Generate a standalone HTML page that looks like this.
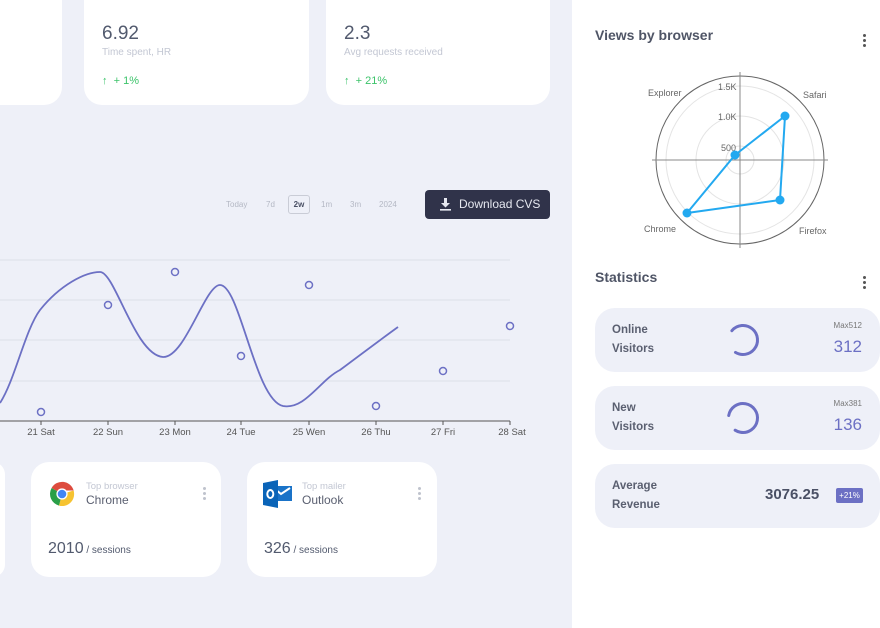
<!DOCTYPE html>
<html><head><meta charset="utf-8"><style>
*{margin:0;padding:0;box-sizing:border-box}
body{width:880px;height:628px;overflow:hidden;background:#eef0f8;font-family:"Liberation Sans",sans-serif;position:relative;color:#4a5065}
.card{position:absolute;background:#fff;border-radius:18px}
.abs{position:absolute}
.big{font-size:19px;color:#525a6e}
.sub{font-size:10px;color:#c3c7d3}
.up{font-size:11px;color:#3cc36a}
.dots{position:absolute;width:3px}
.dots i{display:block;width:3px;height:3px;border-radius:50%;background:#bfc3cd;margin-bottom:2px}
.right{position:absolute;left:572px;top:0;width:308px;height:628px;background:#fff}
.st{position:absolute;left:23px;width:285px;height:64px;background:#eef0f8;border-radius:20px}
.st .l{position:absolute;left:17px;top:13px;font-size:11.5px;font-weight:bold;color:#5a5f70;line-height:19px}
.h{font-size:14px;color:#4f5566;font-weight:bold}
</style></head><body>
<div class="card" style="left:-20px;top:-20px;width:82px;height:125px"></div>
<div class="card" style="left:84px;top:-20px;width:225px;height:125px">
 <div class="abs big" style="left:18px;top:43px">6.92</div>
 <div class="abs sub" style="left:18px;top:67px">Time spent, HR</div>
 <div class="abs up" style="left:18px;top:95px">↑ &nbsp;+ 1%</div>
</div>
<div class="card" style="left:326px;top:-20px;width:224px;height:125px">
 <div class="abs big" style="left:18px;top:43px">2.3</div>
 <div class="abs sub" style="left:18px;top:67px">Avg requests received</div>
 <div class="abs up" style="left:18px;top:95px">↑ &nbsp;+ 21%</div>
</div>
<div class="abs" style="left:226px;top:200px;font-size:8px;color:#b4b8c4">Today</div>
<div class="abs" style="left:266px;top:200px;font-size:8px;color:#b4b8c4">7d</div>
<div class="abs" style="left:288px;top:195px;width:22px;height:19px;border:1px solid #c9ccd6;border-radius:3px;font-size:8px;color:#4a5065;text-align:center;line-height:17px;font-weight:bold">2w</div>
<div class="abs" style="left:321px;top:200px;font-size:8px;color:#b4b8c4">1m</div>
<div class="abs" style="left:350px;top:200px;font-size:8px;color:#b4b8c4">3m</div>
<div class="abs" style="left:379px;top:200px;font-size:8px;color:#b4b8c4">2024</div>
<div class="abs" style="left:425px;top:190px;width:125px;height:29px;background:#30334a;border-radius:4px;color:#e6e8f0;font-size:12px;line-height:29px;padding-left:34px">Download CVS
 <svg class="abs" style="left:15px;top:8px" width="11" height="13" viewBox="0 0 11 13"><path d="M4 0h3v5h3l-4.5 4.5L1 5h3z M0 11h11v1.6H0z" fill="#e6e8f0"/></svg></div>
<svg class="abs" style="left:0;top:250px" width="530" height="200">
 <g stroke="#dcdfe8" stroke-width="1"><line x1="0" y1="10" x2="510" y2="10"/><line x1="0" y1="50" x2="510" y2="50"/><line x1="0" y1="90" x2="510" y2="90"/><line x1="0" y1="131" x2="510" y2="131"/></g>
 <line x1="0" y1="171" x2="510" y2="171" stroke="#555" stroke-width="1"/>
 <g stroke="#555"><line x1="41" y1="171" x2="41" y2="175"/><line x1="108" y1="171" x2="108" y2="175"/><line x1="175" y1="171" x2="175" y2="175"/><line x1="241" y1="171" x2="241" y2="175"/><line x1="309" y1="171" x2="309" y2="175"/><line x1="376" y1="171" x2="376" y2="175"/><line x1="443" y1="171" x2="443" y2="175"/><line x1="510" y1="171" x2="510" y2="175"/></g>
 <g font-size="9.5" fill="#555" text-anchor="middle"><text x="41" y="185">21 Sat</text><text x="108" y="185">22 Sun</text><text x="175" y="185">23 Mon</text><text x="241" y="185">24 Tue</text><text x="309" y="185">25 Wen</text><text x="376" y="185">26 Thu</text><text x="443" y="185">27 Fri</text><text x="512" y="185">28 Sat</text></g>
 <path d="M0 153 C15 130 25 80 40 60 C60 35 85 22 100 22 C115 22 135 105 163 107 C185 108 205 35 220 35 C240 35 255 150 283 156 C305 160 320 130 340 120 C360 105 380 90 398 77" fill="none" stroke="#6c70c4" stroke-width="1.8"/>
 <g fill="#eef0f8" stroke="#6c70c4" stroke-width="1.5"><circle cx="41" cy="162" r="3.5"/><circle cx="108" cy="55" r="3.5"/><circle cx="175" cy="22" r="3.5"/><circle cx="241" cy="106" r="3.5"/><circle cx="309" cy="35" r="3.5"/><circle cx="376" cy="156" r="3.5"/><circle cx="443" cy="121" r="3.5"/><circle cx="510" cy="76" r="3.5"/></g>
</svg>
<div class="card" style="left:-20px;top:462px;width:25px;height:115px"></div>
<div class="card" style="left:31px;top:462px;width:190px;height:115px">
 <svg class="abs" style="left:18px;top:19px" width="26" height="26" viewBox="0 0 26 26"><path d="M13 13 L2.6 7 A12 12 0 0 1 24.6 9.5 L13 9.5z" fill="#dd4b3e"/><path d="M13 13 L24.6 9.5 A12 12 0 0 1 10 24.6z" fill="#f6c331"/><path d="M13 13 L10 24.6 A12 12 0 0 1 2.6 7z" fill="#2a9f48"/><circle cx="13" cy="13" r="5.6" fill="#fff"/><circle cx="13" cy="13" r="4.3" fill="#4285f4"/></svg>
 <div class="abs sub" style="left:55px;top:19px;font-size:9.5px">Top browser</div>
 <div class="abs" style="left:55px;top:31px;font-size:12px;color:#5a5f70">Chrome</div>
 <div class="dots" style="left:172px;top:25px"><i></i><i></i><i></i></div>
 <div class="abs" style="left:17px;top:78px;font-size:16px;color:#525a6e">2010<span style="font-size:10px"> / sessions</span></div>
</div>
<div class="card" style="left:247px;top:462px;width:190px;height:115px">
 <svg class="abs" style="left:16px;top:18px" width="30" height="28" viewBox="0 0 30 28"><rect x="10" y="6" width="19" height="15" fill="#1a73c8"/><path d="M12 9 l6 5 l9 -6" stroke="#fff" stroke-width="2" fill="none"/><path d="M0 3 L15 0 V28 L0 25z" fill="#0a64b8"/><ellipse cx="7.3" cy="14" rx="3" ry="4" fill="none" stroke="#fff" stroke-width="2"/></svg>
 <div class="abs sub" style="left:55px;top:19px;font-size:9.5px">Top mailer</div>
 <div class="abs" style="left:55px;top:31px;font-size:12px;color:#5a5f70">Outlook</div>
 <div class="dots" style="left:171px;top:25px"><i></i><i></i><i></i></div>
 <div class="abs" style="left:17px;top:78px;font-size:16px;color:#525a6e">326<span style="font-size:10px"> / sessions</span></div>
</div>
<div class="right">
 <div class="abs h" style="left:23px;top:27px">Views by browser</div>
 <div class="dots" style="left:291px;top:34px"><i style="background:#555"></i><i style="background:#555"></i><i style="background:#555"></i></div>
 <svg class="abs" style="left:0;top:0" width="308" height="260">
  <g fill="none" stroke="#e4e4e4"><circle cx="168" cy="160" r="14"/><circle cx="168" cy="160" r="44"/><circle cx="168" cy="160" r="74"/></g>
  <circle cx="168" cy="160" r="84" fill="none" stroke="#666"/>
  <g stroke="#888"><line x1="168" y1="72" x2="168" y2="248"/><line x1="80" y1="160" x2="256" y2="160"/></g>
  <g font-size="9" fill="#666"><text x="146" y="90">1.5K</text><text x="146" y="120">1.0K</text><text x="149" y="151">500</text><text x="76" y="96">Explorer</text><text x="231" y="98">Safari</text><text x="72" y="232">Chrome</text><text x="227" y="234">Firefox</text></g>
  <path d="M163 155 L213 116 L208 200 L115 213z" fill="none" stroke="#23a9f0" stroke-width="2"/>
  <g fill="#23a9f0"><circle cx="163" cy="155" r="4.5"/><circle cx="213" cy="116" r="4.5"/><circle cx="208" cy="200" r="4.5"/><circle cx="115" cy="213" r="4.5"/></g>
 </svg>
 <div class="abs h" style="left:23px;top:269px">Statistics</div>
 <div class="dots" style="left:291px;top:276px"><i style="background:#555"></i><i style="background:#555"></i><i style="background:#555"></i></div>
 <div class="st" style="top:308px"><div class="l">Online<br>Visitors</div>
  <svg class="abs" style="left:130px;top:14px" width="36" height="36"><circle cx="18" cy="18" r="14.5" fill="none" stroke="#6c70c4" stroke-width="3" stroke-linecap="round" stroke-dasharray="66 100" transform="rotate(-140 18 18)"/></svg>
  <div class="abs" style="right:18px;top:13px;font-size:8px;color:#777">Max512</div>
  <div class="abs" style="right:18px;top:29px;font-size:17px;color:#6c70c4">312</div></div>
 <div class="st" style="top:386px"><div class="l">New<br>Visitors</div>
  <svg class="abs" style="left:130px;top:14px" width="36" height="36"><circle cx="18" cy="18" r="14.5" fill="none" stroke="#6c70c4" stroke-width="3" stroke-linecap="round" stroke-dasharray="74 100" transform="rotate(-170 18 18)"/></svg>
  <div class="abs" style="right:18px;top:13px;font-size:8px;color:#777">Max381</div>
  <div class="abs" style="right:18px;top:29px;font-size:17px;color:#6c70c4">136</div></div>
 <div class="st" style="top:464px"><div class="l">Average<br>Revenue</div>
  <div class="abs" style="left:170px;top:22px;font-size:15px;font-weight:bold;color:#4a5065">3076.25</div>
  <div class="abs" style="left:241px;top:24px;width:27px;height:15px;background:#6c70c4;border-radius:2px;color:#fff;font-size:8px;text-align:center;line-height:15px">+21%</div></div>
</div>
</body></html>
